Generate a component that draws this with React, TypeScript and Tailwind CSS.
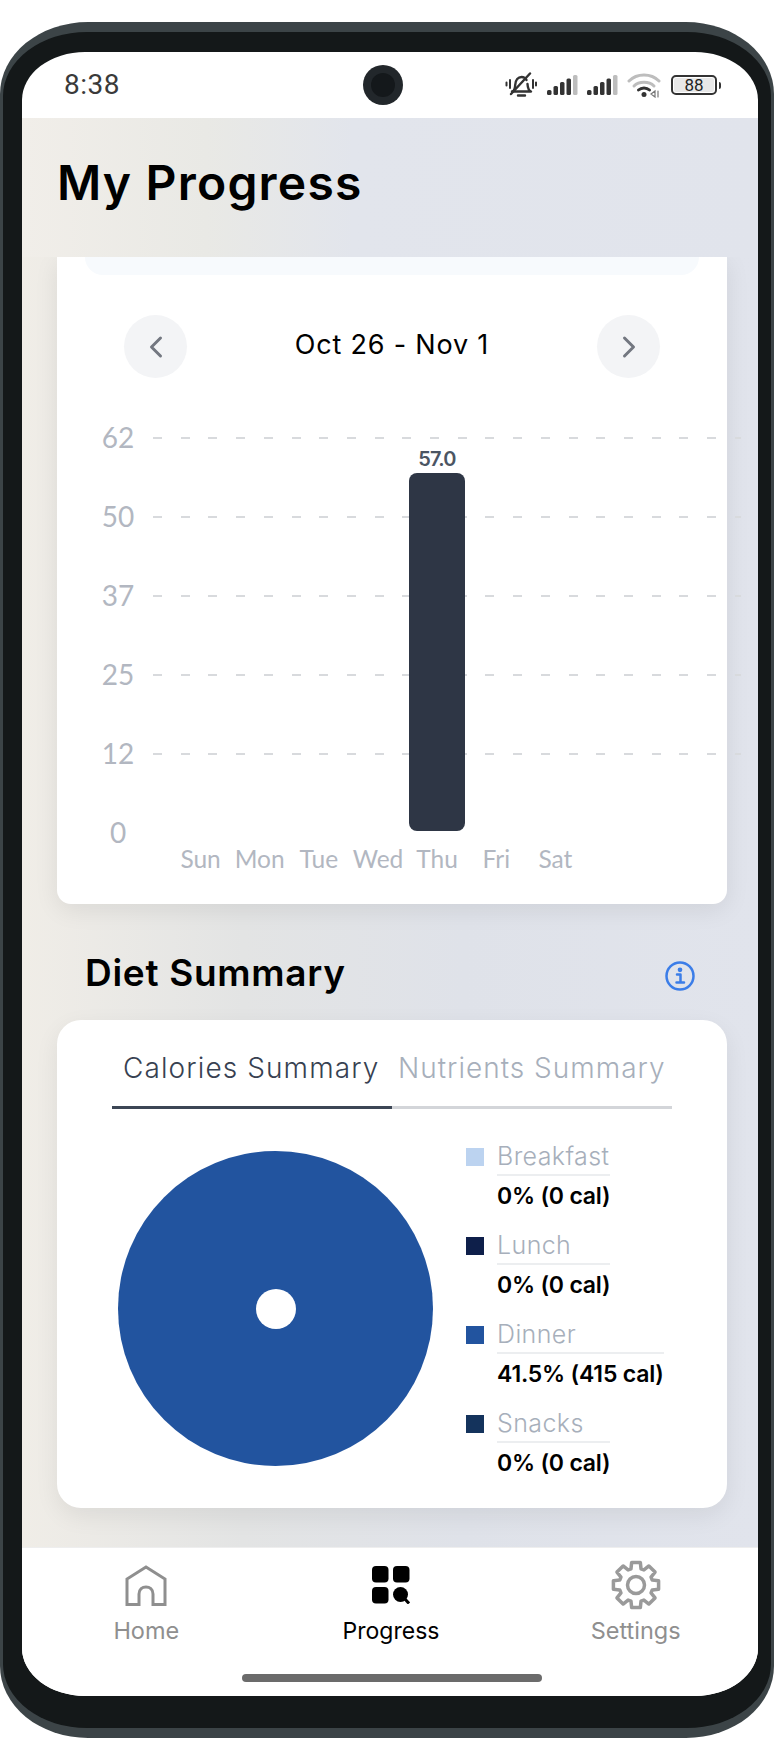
import { ChevronLeft, ChevronRight } from "lucide-react";

const poppins = "font-['Inter','Noto_Sans',sans-serif]";

const yTicks = ["62", "50", "37", "25", "12"];
const days = ["Sun", "Mon", "Tue", "Wed", "Thu", "Fri", "Sat"];
const legend = [
  { name: "Breakfast", value: "0% (0 cal)", color: "bg-[#bcd3f0]" },
  { name: "Lunch", value: "0% (0 cal)", color: "bg-[#0e1f4a]" },
  { name: "Dinner", value: "41.5% (415 cal)", color: "bg-[#22549f]" },
  { name: "Snacks", value: "0% (0 cal)", color: "bg-[#14335c]" },
];

// 8 tooth gear outline for the settings tab
function gearPath(cx: number, cy: number, outer: number, root: number) {
  const pts: string[] = [];
  const step = Math.PI / 4;
  for (let i = 0; i < 8; i++) {
    const a = -Math.PI / 2 + i * step;
    const corners: [number, number][] = [
      [root, a - 0.3],
      [outer, a - 0.19],
      [outer, a + 0.19],
      [root, a + 0.3],
    ];
    for (const [r, t] of corners) {
      pts.push(`${(cx + r * Math.cos(t)).toFixed(2)} ${(cy + r * Math.sin(t)).toFixed(2)}`);
    }
  }
  return `M${pts.join("L")}Z`;
}

function SignalIcon() {
  return (
    <svg width="31" height="20" viewBox="0 0 31 20">
      <rect x="0" y="15" width="4.500" height="5" rx="1.500" fill="#333" />
      <rect x="6.500" y="11" width="4.500" height="9" rx="1.500" fill="#333" />
      <rect x="13" y="7" width="4.500" height="13" rx="1.500" fill="#333" />
      <rect x="19.500" y="3.500" width="4.500" height="16.500" rx="1.500" fill="#333" />
      <rect x="26" y="0" width="4.500" height="20" rx="1.500" fill="#bdbdbd" />
    </svg>
  );
}

function StatusIcons() {
  return (
    <div className="flex items-center">
      <svg width="32" height="26" viewBox="0 0 32 26" fill="none" stroke="#333" strokeWidth="2.400" strokeLinecap="round" strokeLinejoin="round" className="mr-[10px]">
        <path d="M7 19.500c2.500-.5 3-2.500 3.200-6.500.3-5 3-8 6.300-8 2.200 0 4 1 5 3M22.500 12c.2 3.500 1 6.500 3.500 7.500H7" />
        <path d="M13 23.500h7M6 22 25 1.500" />
        <path d="M5 8v8M1.500 10.500v3M28 8v8M31 10.500v3" strokeWidth="2" />
      </svg>
      <div className="mr-[9px]"><SignalIcon /></div>
      <div className="mr-[9px]"><SignalIcon /></div>
      <svg width="34" height="25" viewBox="0 0 34 25" fill="none" strokeLinecap="round" className="mr-[10px]">
        <path d="M2 8c8-8 22-8 30 0" stroke="#bdbdbd" strokeWidth="3" />
        <path d="M7 13c5-5 15-5 20 0" stroke="#bdbdbd" strokeWidth="3" />
        <path d="M11.500 17c3-2.800 8-2.800 11 0" stroke="#333" strokeWidth="3" />
        <circle cx="17" cy="21.500" r="2.500" fill="#333" />
        <path d="m24 21 4-3v6zM31 18v6" stroke="#777" strokeWidth="1.200" />
      </svg>
      <div className="flex items-center">
        <div className="flex h-[20px] w-[46px] items-center justify-center rounded-[5px] border-2 border-[#333] p-[1px]">
          <div className="flex h-full w-full items-center justify-center rounded-[2px] bg-[#e8e8e8] font-['Roboto',sans-serif] text-[17px] leading-none text-[#222]">88</div>
        </div>
        <div className="ml-[2px] h-[7px] w-[2px] rounded-r-sm bg-[#333]" />
      </div>
    </div>
  );
}

function DateNavButton({ children }: { children: React.ReactNode }) {
  return (
    <div className="flex h-[63px] w-[63px] items-center justify-center rounded-full bg-[#f3f4f6] text-[#737780]">
      {children}
    </div>
  );
}

function WeekChart() {
  return (
    <div className="relative mt-[59px] pl-[34px]">
      <div className="flex flex-col">
        {yTicks.map((t) => (
          <div key={t} className="flex h-[79px] items-start">
            <span className="-mt-[15px] w-[54px] text-center font-['Lato',sans-serif] text-[28px] leading-[30px] text-[#b2b7c1]">{t}</span>
            <div className="mr-[-14px] ml-[8px] h-[2px] flex-1 bg-[repeating-linear-gradient(to_right,#d8dadd_0,#d8dadd_9px,transparent_9px,transparent_27.7px)]" />
          </div>
        ))}
        <div className="flex h-[12px] items-start">
          <span className="-mt-[15px] w-[54px] text-center font-['Lato',sans-serif] text-[28px] leading-[30px] text-[#b2b7c1]">0</span>
        </div>
      </div>
      <div className="absolute top-[8px] left-[352px] flex w-[56px] flex-col items-center">
        <span className="font-['Inter',sans-serif] text-[20px] leading-[28px] font-semibold tracking-[-0.8px] text-[#4b5563]">57.0</span>
        <div className="h-[358px] w-[56px] rounded-[8px] bg-[#2e3645]" />
      </div>
      <div className="ml-[80px] grid w-[414px] grid-cols-7">
        {days.map((d) => (
          <span key={d} className="text-center font-['Lato',sans-serif] text-[24.500px] leading-[30px] whitespace-nowrap text-[#b2b7c1]">{d}</span>
        ))}
      </div>
    </div>
  );
}

function DietLegend() {
  return (
    <div className="flex flex-col gap-[15px]">
      {legend.map((l) => (
        <div key={l.name} className="flex items-start">
          <div className={`mt-[6px] h-[18px] w-[18px] ${l.color}`} />
          <div className="ml-[13px] inline-flex flex-col">
            <span className={`${poppins} -mt-[1px] border-b-2 border-[#eceef0] pb-[3px] text-[25px] leading-[30px] font-light tracking-[0.4px] text-[#a7afbb]`}>{l.name}</span>
            <span className={`${poppins} text-[23px] leading-[40px] font-semibold tracking-[-0.2px] whitespace-nowrap text-black`}>{l.value}</span>
          </div>
        </div>
      ))}
    </div>
  );
}

function NavItem({ label, active, children }: { label: string; active?: boolean; children: React.ReactNode }) {
  return (
    <div className="flex w-[245px] flex-col items-center">
      <div className="flex h-[50px] items-center justify-center">{children}</div>
      <span className={`font-['Inter',sans-serif] mt-[5px] leading-[32px] ${active ? "text-[23px] text-black" : "text-[23.500px] text-[#8f8f8f]"}`}>{label}</span>
    </div>
  );
}

export default function App() {
  return (
    <div className="h-[1738px] w-[774px] overflow-hidden bg-white pt-[22px]">
      <div className="h-[1716px] rounded-[88px/72px] bg-[#3c4447] px-[3px] pt-[10px] pb-[10px]">
        <div className="h-full rounded-[84px/64px] bg-[#141819] pt-[20px] pr-[13px] pb-[32px] pl-[19px]">
          <div className="flex h-full flex-col overflow-hidden rounded-[63px/48px] bg-white">
            {/* status bar */}
            <div className="relative flex h-[66px] shrink-0 items-center justify-between pr-[37px] pl-[42px]">
              <span className="font-['Roboto',sans-serif] text-[28px] tracking-[0.5px] text-[#3a3a3a]">8:38</span>
              <div className="absolute top-[13px] left-[341px] flex h-[40px] w-[40px] items-center justify-center rounded-full bg-[#22272b]">
                <div className="h-[24px] w-[24px] rounded-full bg-[#14181b]" />
              </div>
              <StatusIcons />
            </div>

            {/* header */}
            <div className="flex h-[139px] shrink-0 items-center bg-[linear-gradient(to_right,#f1eee9_0%,#e9e9e5_25%,#e2e5ec_45%,#e1e4ec_100%)] pb-[10px] pl-[35px]">
              <h1 className={`${poppins} text-[48px] leading-none font-semibold tracking-[1.2px] text-black`}>My Progress</h1>
            </div>

            {/* scrolling content */}
            <div className="min-h-0 flex-1 overflow-hidden bg-[linear-gradient(to_right,#f0ede7_0%,#e3e4e4_30%,#dfe2e9_60%,#e1e4ec_100%)] pr-[31px] pl-[35px]">
              <div className="h-[647px] rounded-b-[14px] bg-white shadow-[0_6px_24px_rgba(0,0,0,0.08)]">
                <div className="mx-[28px] h-[18px] rounded-b-[20px] bg-[#f7fafd]" />
                <div className="mx-[67px] mt-[40px] flex items-center justify-between">
                  <DateNavButton><ChevronLeft size={36} strokeWidth={2} /></DateNavButton>
                  <span className={`${poppins} -mt-[2px] text-[27px] font-normal tracking-[0.8px] text-black`}>Oct 26 - Nov 1</span>
                  <DateNavButton><ChevronRight size={36} strokeWidth={2} /></DateNavButton>
                </div>
                <WeekChart />
              </div>

              <div className="mt-[40px] flex items-center justify-between pr-[32px] pl-[28px]">
                <h2 className={`${poppins} text-[37px] leading-[58px] font-semibold tracking-[0.7px] text-black`}>Diet Summary</h2>
                <svg width="30" height="30" viewBox="0 0 30 30" fill="none" stroke="#3b7de8" strokeWidth="2.500" strokeLinecap="round" strokeLinejoin="round" className="mt-[6px]">
                  <circle cx="15" cy="15" r="13.500" />
                  <path d="M12 13.500h3.500V21M11.500 21.500h7.500" />
                  <circle cx="15" cy="8.800" r="1.100" fill="#3b7de8" />
                </svg>
              </div>

              <div className="mt-[18px] h-[488px] rounded-[24px] bg-white px-[55px] pt-[28px] shadow-[0_8px_24px_rgba(0,0,0,0.07)]">
                <div className="flex">
                  <div className="w-[280px] border-b-[3px] border-[#3c4655] pb-[18px] pl-[11px]">
                    <span className={`${poppins} text-[28px] leading-[40px] font-light tracking-[1.1px] whitespace-nowrap text-[#374151]`}>Calories Summary</span>
                  </div>
                  <div className="w-[280px] border-b-[3px] border-[#d3d5d9] pb-[18px] pl-[6px]">
                    <span className={`${poppins} text-[28px] leading-[40px] font-light tracking-[1px] whitespace-nowrap text-[#a7afbb]`}>Nutrients Summary</span>
                  </div>
                </div>
                <div className="mt-[12px] flex items-start">
                  <div className="ml-[6px] mt-[30px] flex h-[315px] w-[315px] items-center justify-center rounded-full bg-[#22549f]">
                    <div className="h-[40px] w-[40px] rounded-full bg-white" />
                  </div>
                  <div className="mt-[21px] ml-[33px]">
                    <DietLegend />
                  </div>
                </div>
              </div>
            </div>

            {/* bottom nav */}
            <div className="relative h-[149px] shrink-0 border-t border-[#eeeeee] bg-white">
              <div className="flex pt-[12px] pl-[2px]">
                <NavItem label="Home">
                  <svg width="42" height="41" viewBox="0 0 42 41" fill="none" stroke="#8f8f8f" strokeWidth="3" strokeLinejoin="miter">
                    <path d="M2 39.500V14L21 2l19 12v25.500H28V29c0-9.500-14-9.500-14 0v10.500z" />
                  </svg>
                </NavItem>
                <NavItem label="Progress" active>
                  <svg width="38" height="38" viewBox="0 0 38 38" fill="black">
                    <rect x="0" y="0" width="16.500" height="16.500" rx="4" />
                    <rect x="21" y="0" width="16.500" height="16.500" rx="4" />
                    <rect x="0" y="21" width="16.500" height="16.500" rx="4" />
                    <circle cx="28.500" cy="28.500" r="7.500" />
                    <path d="m32 32 5 5.500" stroke="black" strokeWidth="3" />
                  </svg>
                </NavItem>
                <NavItem label="Settings">
                  <svg width="50" height="50" viewBox="0 0 50 50" fill="none" stroke="#9a9a9a" strokeWidth="3.500" strokeLinejoin="round">
                    <path d={gearPath(25, 25, 23, 17)} />
                    <circle cx="25" cy="25" r="8.500" />
                  </svg>
                </NavItem>
              </div>
              <div className="absolute bottom-[14px] left-[220px] h-[8px] w-[300px] rounded-full bg-[#6b6b6b]" />
            </div>
          </div>
        </div>
      </div>
    </div>
  );
}
